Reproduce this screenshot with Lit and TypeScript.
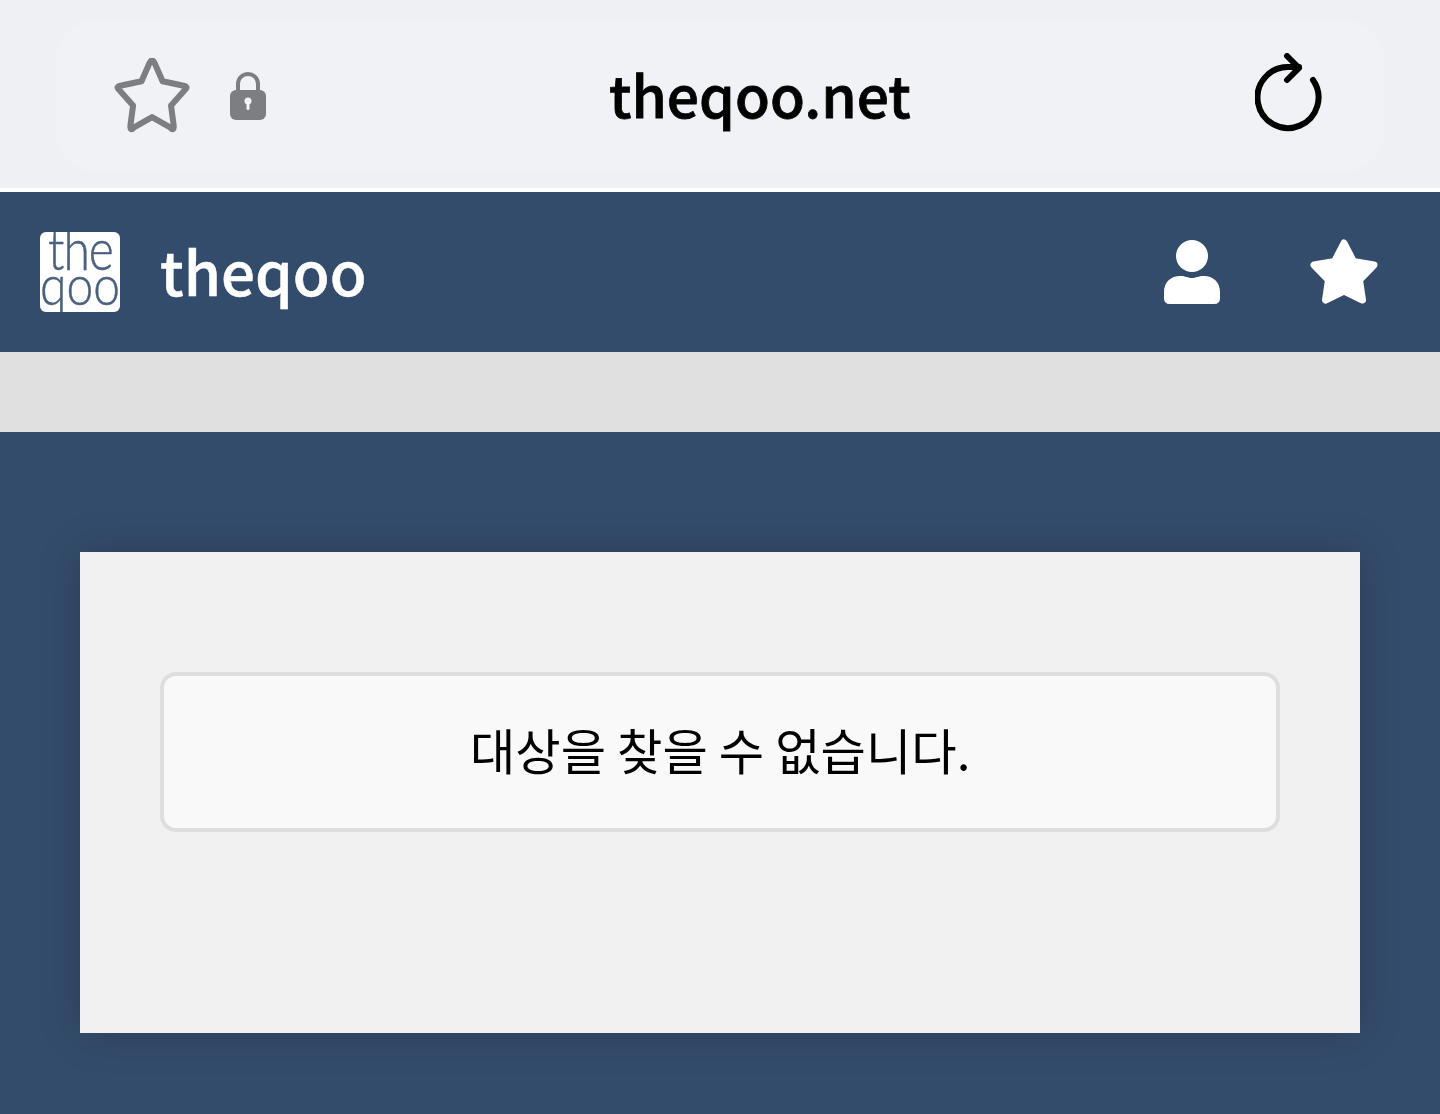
import { LitElement, html, css } from "lit";
import { customElement } from "lit/decorators.js";

@customElement("app-root")
export class AppRoot extends LitElement {
  static styles = css`
    :host { display: block; width: 1440px; height: 1114px; overflow: hidden; background: #344c6c; font-family: "Noto Sans CJK KR", "Noto Sans", sans-serif; }
    .chrome { height: 188px; box-sizing: border-box; padding: 20px 56px 16px; background: #eff0f4; }
    .pill { height: 152px; border-radius: 40px; background: #f1f2f5; display: flex; align-items: center; padding: 0 61px 0 56px; }
    .pill-left { display: flex; align-items: center; gap: 39px; width: 497px; flex: none; }
    .pill-right { margin-left: auto; }
    .url { font-size: 56.900px; font-weight: 500; color: #000; line-height: 1; padding-bottom: 6px; -webkit-text-stroke: 0.8px #000; will-change: transform; }
    .sep { height: 4px; background: #fff; }
    header { height: 160px; background: #344c6c; display: flex; align-items: center; padding: 0 62px 0 40px; }
    .logo { width: 80px; height: 80px; border-radius: 6px; background: #fff; color: #4a6080; overflow: hidden; display: flex; flex-direction: column; align-items: center; font-family: "Lato", sans-serif; font-weight: 300; font-size: 48px; line-height: 36px; -webkit-text-stroke: 0.4px #4a6080; }
    .logo span { display: block; will-change: transform; }
    .logo .the { letter-spacing: -1px; transform: scaleY(1.2); transform-origin: 50% 100%; margin-top: 2px; }
    .logo .qoo { transform: scaleY(1.15); transform-origin: 50% 0; margin-top: -6px; }
    .brand { margin-left: 39.500px; flex: 1; }
    .brand span { display: inline-block; color: #fff; font-size: 60px; font-weight: 500; line-height: 1; padding-bottom: 4px; -webkit-text-stroke: 0.5px #fff; will-change: transform; }
    .actions { display: flex; align-items: center; gap: 90px; }
    .band { height: 80px; background: #e0e0e0; }
    main { padding: 120px 80px 0; }
    .card { height: 481px; box-sizing: border-box; padding: 120px 80px 0; background: #f1f1f1; box-shadow: 0 0 40px rgba(0,0,0,.2); }
    .msg { height: 160px; box-sizing: border-box; border: 4px solid #dedede; border-radius: 16px; background: #f9f9f9; display: flex; align-items: center; justify-content: center; padding-bottom: 8px; color: #000; }
    .msg span { font-size: 49.300px; font-weight: 400; will-change: transform; }
    svg { display: block; }
  `;

  render() {
    return html`
      <div class="chrome">
        <div class="pill">
          <div class="pill-left">
            <svg width="78" height="76" viewBox="2 2 74 72"><path d="M37.500 7 Q40 1.500 42.500 7 L50 24 L69 28 Q75.500 29 70.700 32.700 L58 47 L60.400 65 Q61.500 72.500 56.700 67.500 L40 58 L23.300 67.500 Q18.500 72.500 19.600 65 L22 47 L9.300 32.700 Q4.500 29 11 28 L30 24 Z" fill="none" stroke="#7d7e81" stroke-width="5.700" stroke-linejoin="round"/></svg>
            <svg width="38" height="50" viewBox="0 0 38 50"><path d="M9 22 V13 a10 10 0 0 1 20 0 V22" fill="none" stroke="#7d7e81" stroke-width="4"/><rect x="1" y="19" width="36" height="30" rx="6" fill="#7d7e81"/><circle cx="19" cy="30" r="3.500" fill="#f1f2f5"/><rect x="17.500" y="31" width="3" height="8" rx="1.500" fill="#f1f2f5"/></svg>
          </div>
          <div class="url">theqoo.net</div>
          <div class="pill-right">
            <svg width="68" height="86" viewBox="0 0 68 86"><path d="M58 27 A30.500 30.500 0 1 1 34 14 H44" fill="none" stroke="#000" stroke-width="6" stroke-linecap="round"/><path d="M32 3 L44 15 L32 27" fill="none" stroke="#000" stroke-width="6" stroke-linecap="round" stroke-linejoin="round"/></svg>
          </div>
        </div>
      </div>
      <div class="sep"></div>
      <header>
        <div class="logo"><span class="the">the</span><span class="qoo">qoo</span></div>
        <div class="brand"><span>theqoo</span></div>
        <div class="actions">
          <svg width="56" height="64" viewBox="0 0 56 64"><circle cx="28" cy="16" r="16" fill="#fff"/><path d="M0 52 C0 42 7 36 16 36 C22 36 24 38 28 38 C32 38 34 36 40 36 C49 36 56 42 56 52 V58 Q56 64 50 64 H6 Q0 64 0 58 Z" fill="#fff"/></svg>
          <svg width="68" height="66" viewBox="0 0 68 66"><path d="M34 4 L43.500 22.500 L64 26 L49.500 41 L52.500 61 L34 52 L15.500 61 L18.500 41 L4 26 L24.500 22.500 Z" fill="#fff" stroke="#fff" stroke-width="7" stroke-linejoin="round"/></svg>
        </div>
      </header>
      <div class="band"></div>
      <main>
        <div class="card">
          <div class="msg"><span>대상을 찾을 수 없습니다.</span></div>
        </div>
      </main>
    `;
  }
}
